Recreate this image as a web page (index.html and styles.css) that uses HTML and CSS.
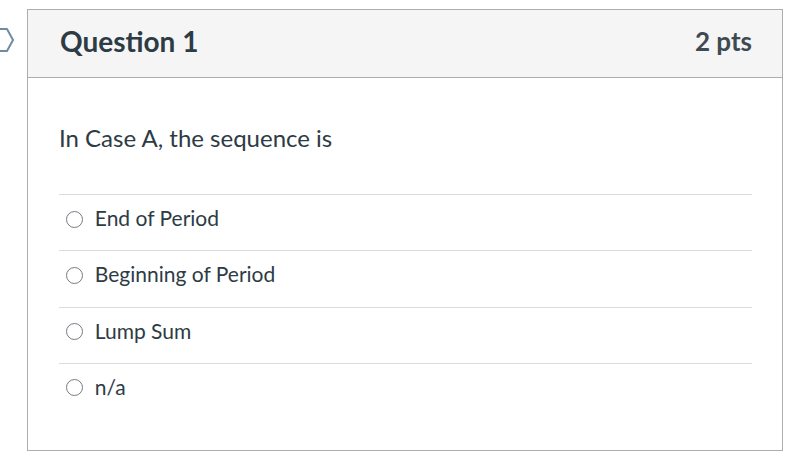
FILE: index.html
```html
<!DOCTYPE html>
<html>
<head>
<meta charset="utf-8">
<link rel="stylesheet" href="styles.css">
</head>
<body>
<div class="page">
  <svg class="flag" width="20" height="30" viewBox="0 0 20 30">
    <polygon points="-12,4 7,4 13,15 7,26 -12,26" fill="none" stroke="#6d8ba3" stroke-width="2" stroke-linejoin="round"/>
  </svg>
  <div class="card">
    <div class="header">
      <h2 class="title">Question 1</h2>
      <span class="pts">2 pts</span>
    </div>
    <div class="body">
      <p class="question">In Case A, the sequence is</p>
      <ul class="answers">
        <li class="answer"><span class="radio"></span><span class="label">End of Period</span></li>
        <li class="answer"><span class="radio"></span><span class="label">Beginning of Period</span></li>
        <li class="answer"><span class="radio"></span><span class="label">Lump Sum</span></li>
        <li class="answer"><span class="radio"></span><span class="label">n/a</span></li>
      </ul>
    </div>
  </div>
</div>
</body>
</html>
```

FILE: styles.css
```css
html, body {
  margin: 0;
  padding: 0;
  background: #ffffff;
}
body {
  font-family: Lato, "Open Sans", sans-serif;
  color: #2d3b45;
}
.page {
  position: relative;
  padding: 9px 0 0 27px;
}
.flag {
  position: absolute;
  left: 0;
  top: 25px;
}
.card {
  width: 754px;
  height: 440px;
  border: 1px solid #adadad;
  display: flex;
  flex-direction: column;
}
.header {
  height: 62px;
  background: #f5f5f5;
  border-bottom: 1px solid #adadad;
  display: flex;
  align-items: center;
  justify-content: space-between;
  padding: 0 30px 5px 32px;
}
.title {
  margin: 0;
  font-size: 28px;
  line-height: 34px;
  font-weight: 700;
  color: #2d3b45;
}
.pts {
  font-size: 26px;
  line-height: 34px;
  font-weight: 700;
  color: #3e4a52;
}
.body {
  padding: 0 30px 0 31px;
}
.question {
  margin: 44px 0 0 0;
  font-size: 24px;
  line-height: 32px;
}
.answers {
  list-style: none;
  margin: 40px 0 0 0;
  padding: 0;
}
.answer {
  border-top: 1px solid #dcdcdc;
  height: 55.3px;
  display: flex;
  align-items: flex-start;
}
.radio {
  width: 15px;
  height: 15px;
  border: 1.6px solid #737b82;
  border-radius: 50%;
  margin: 15.5px 11.8px 0 7px;
  flex: none;
}
.label {
  font-size: 21px;
  line-height: 28px;
  margin-top: 9px;
}
```
